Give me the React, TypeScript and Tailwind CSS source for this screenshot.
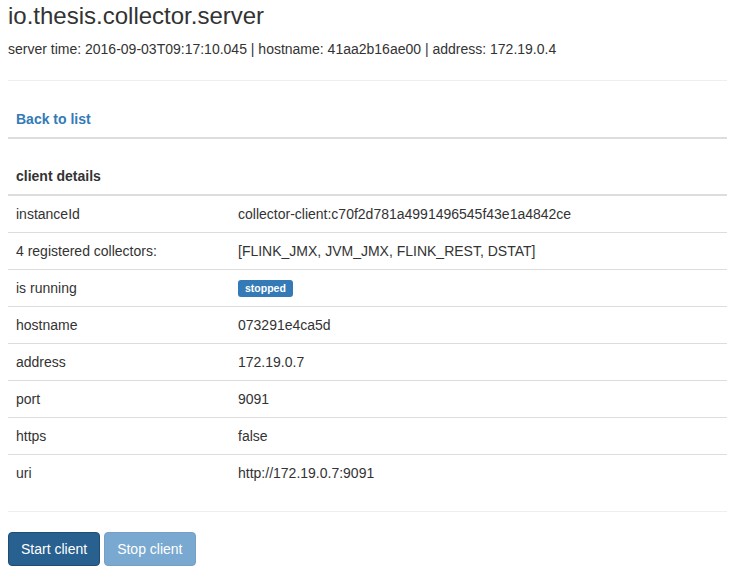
const rows: { label: string; value: React.ReactNode }[] = [
  { label: "instanceId", value: "collector-client:c70f2d781a4991496545f43e1a4842ce" },
  { label: "4 registered collectors:", value: "[FLINK_JMX, JVM_JMX, FLINK_REST, DSTAT]" },
  {
    label: "is running",
    value: (
      <span className="inline-block rounded-[3px] bg-[#337ab7] px-[7px] pt-[3px] pb-[3px] align-[1px] text-[10.5px] font-bold leading-none text-white">
        stopped
      </span>
    ),
  },
  { label: "hostname", value: "073291e4ca5d" },
  { label: "address", value: "172.19.0.7" },
  { label: "port", value: "9091" },
  { label: "https", value: "false" },
  { label: "uri", value: "http://172.19.0.7:9091" },
]

export default function App() {
  return (
    <div className="min-h-screen bg-white px-2 pt-[3px] font-['Liberation_Sans',Arial,sans-serif] text-[14px] leading-[20px] text-[#333]">
      <h3 className="text-[24px] leading-[26.4px] font-medium">io.thesis.collector.server</h3>
      <p className="mt-[10px]">
        server time: 2016-09-03T09:17:10.045 | hostname: 41aa2b16ae00 | address: 172.19.0.4
      </p>
      <hr className="mt-[21px] border-t border-[#eee]" />

      {/* back link */}
      <table className="mt-[20px] w-full border-collapse">
        <thead>
          <tr>
            <th className="border-b-2 border-[#ddd] p-2 text-left font-bold">
              <a href="#" className="text-[#337ab7]">
                Back to list
              </a>
            </th>
          </tr>
        </thead>
      </table>

      {/* details */}
      <table className="mt-[19px] w-full border-collapse">
        <thead>
          <tr>
            <th colSpan={2} className="border-b-2 border-[#ddd] p-2 text-left font-bold">
              client details
            </th>
          </tr>
        </thead>
        <tbody>
          {rows.map((row, i) => (
            <tr key={row.label}>
              <td className={`w-[222px] p-2 ${i > 0 ? "border-t border-[#ddd]" : ""}`}>{row.label}</td>
              <td className={`p-2 ${i > 0 ? "border-t border-[#ddd]" : ""}`}>{row.value}</td>
            </tr>
          ))}
        </tbody>
      </table>

      <hr className="mt-[20px] border-t border-[#eee]" />

      <div className="mt-[20px] flex gap-1">
        <button className="h-[34px] rounded-[4px] border border-[#204d74] bg-[#286090] px-3 text-white">
          Start client
        </button>
        <button
          disabled
          className="h-[34px] cursor-not-allowed rounded-[4px] border border-[#2e6da4] bg-[#337ab7] px-3 text-white opacity-65"
        >
          Stop client
        </button>
      </div>
    </div>
  )
}
